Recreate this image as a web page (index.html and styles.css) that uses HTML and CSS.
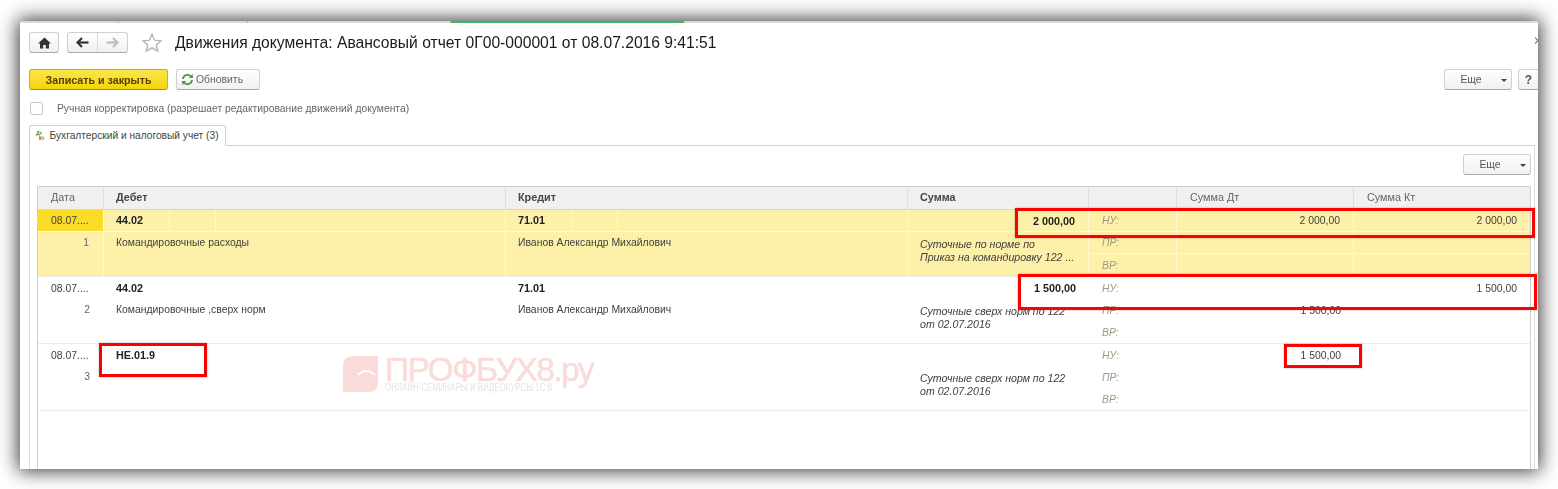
FILE: index.html
```html
<!DOCTYPE html>
<html lang="ru">
<head>
    <meta charset="UTF-8">
    <title>Движения документа</title>
    <link rel="stylesheet" href="styles.css">
</head>
<body>

<div class="window">
    <div class="top-strip"><span class="seg seg-1"></span><span class="seg seg-2"></span><span class="seg seg-3"></span><span class="strip-green"></span></div>
    <svg class="close-mark" width="3" height="7" viewBox="0 0 3 7"><path d="M0 .5 L3 3.5 L0 6.5" fill="none" stroke="#777" stroke-width="1.2"/></svg>

    <div class="title-row">
        <button class="btn btn-home">
            <svg width="13" height="12" viewBox="0 0 13 12"><path d="M6.5 .5 L13 6.5 L11 6.5 L11 11.5 L7.8 11.5 L7.8 8 L5.2 8 L5.2 11.5 L2 11.5 L2 6.5 L0 6.5 Z" fill="#333"/></svg>
        </button>
        <div class="btn nav-pair">
            <span class="nav-half">
                <svg width="13" height="11" viewBox="0 0 13 11"><path d="M2 5.5 L12.5 5.5" stroke="#333" stroke-width="2.2" fill="none"/><path d="M6 1 L1.5 5.5 L6 10" stroke="#333" stroke-width="2.2" fill="none"/></svg>
            </span>
            <span class="nav-half">
                <svg width="13" height="11" viewBox="0 0 13 11"><path d="M11 5.5 L.5 5.5" stroke="#bdbdbd" stroke-width="2.2" fill="none"/><path d="M7 1 L11.5 5.5 L7 10" stroke="#bdbdbd" stroke-width="2.2" fill="none"/></svg>
            </span>
        </div>
        <svg class="star" width="20" height="19" viewBox="0 0 20 19"><path d="M10 1.2 L12.6 7.2 L19 7.8 L14.2 12 L15.7 18.2 L10 14.9 L4.3 18.2 L5.8 12 L1 7.8 L7.4 7.2 Z" fill="none" stroke="#b5b5b5" stroke-width="1.4"/></svg>
        <h1>Движения документа: Авансовый отчет 0Г00-000001 от 08.07.2016 9:41:51</h1>
    </div>

    <div class="action-row">
        <button class="btn btn-save">Записать и закрыть</button>
        <button class="btn btn-refresh">
            <svg width="13" height="13" viewBox="0 0 13 13"><path d="M2 6 A4.5 4.5 0 0 1 10 3.5" fill="none" stroke="#3a9a3a" stroke-width="1.7"/><path d="M8 5 L12 5 L11.6 1 Z" fill="#3a9a3a"/><path d="M11 7 A4.5 4.5 0 0 1 3 9.5" fill="none" stroke="#3a9a3a" stroke-width="1.7"/><path d="M5 8 L1 8 L1.4 12 Z" fill="#3a9a3a"/></svg>
            Обновить
        </button>
        <button class="btn btn-more btn-more-top">Еще<span class="caret"></span></button>
        <button class="btn btn-help">?</button>
    </div>

    <label class="check-row"><span class="check"></span>Ручная корректировка (разрешает редактирование движений документа)</label>

    <div class="tabs">
        <div class="tab">
            <span class="tab-icon"><span class="dt">Дт</span><span class="kt">Кт</span></span>
            Бухгалтерский и налоговый учет (3)
        </div>
    </div>

    <div class="panel">
        <div class="panel-bar">
            <button class="btn btn-more">Еще<span class="caret"></span></button>
        </div>
        <div class="grid-box">
            <table class="grid">
                <colgroup>
                    <col class="c-date"><col class="c-acc"><col class="c-acc"><col class="c-sum"><col class="c-label"><col class="c-val"><col class="c-val2">
                </colgroup>
                <thead>
                    <tr>
                        <th class="th-light">Дата</th>
                        <th class="tight">Дебет</th>
                        <th class="tight">Кредит</th>
                        <th class="tight">Сумма</th>
                        <th></th>
                        <th class="th-light">Сумма Дт</th>
                        <th class="th-light">Сумма Кт</th>
                    </tr>
                </thead>
                <tbody class="rec selected">
                    <tr>
                        <td class="date-cur">08.07....</td>
                        <td class="split"><div><span><b>44.02</b></span><span></span><span></span></div></td>
                        <td class="split"><div><span><b>71.01</b></span><span></span><span></span></div></td>
                        <td class="num"><b>2 000,00</b></td>
                        <td class="lbl">НУ:</td>
                        <td class="num">2 000,00</td>
                        <td class="num">2 000,00</td>
                    </tr>
                    <tr>
                        <td class="idx" rowspan="2">1</td>
                        <td class="top tight" rowspan="2">Командировочные расходы</td>
                        <td class="top tight" rowspan="2">Иванов Александр Михайлович</td>
                        <td class="note tight" rowspan="2">Суточные по норме по<br>Приказ на командировку 122 ...</td>
                        <td class="lbl">ПР:</td>
                        <td></td>
                        <td></td>
                    </tr>
                    <tr class="last">
                        <td class="lbl">ВР:</td>
                        <td></td>
                        <td></td>
                    </tr>
                </tbody>
                <tbody class="rec">
                    <tr>
                        <td>08.07....</td>
                        <td class="tight"><b>44.02</b></td>
                        <td class="tight"><b>71.01</b></td>
                        <td class="num"><b>1 500,00</b></td>
                        <td class="lbl">НУ:</td>
                        <td></td>
                        <td class="num">1 500,00</td>
                    </tr>
                    <tr>
                        <td class="idx" rowspan="2">2</td>
                        <td class="top tight" rowspan="2">Командировочные ,сверх норм</td>
                        <td class="top tight" rowspan="2">Иванов Александр Михайлович</td>
                        <td class="note tight" rowspan="2">Суточные сверх норм по 122<br>от 02.07.2016</td>
                        <td class="lbl">ПР:</td>
                        <td class="num">1 500,00</td>
                        <td></td>
                    </tr>
                    <tr class="last">
                        <td class="lbl">ВР:</td>
                        <td></td>
                        <td></td>
                    </tr>
                </tbody>
                <tbody class="rec">
                    <tr>
                        <td>08.07....</td>
                        <td class="tight"><b>НЕ.01.9</b></td>
                        <td></td>
                        <td></td>
                        <td class="lbl">НУ:</td>
                        <td class="num">1 500,00</td>
                        <td></td>
                    </tr>
                    <tr>
                        <td class="idx" rowspan="2">3</td>
                        <td class="top" rowspan="2"></td>
                        <td class="top" rowspan="2"></td>
                        <td class="note tight" rowspan="2">Суточные сверх норм по 122<br>от 02.07.2016</td>
                        <td class="lbl">ПР:</td>
                        <td></td>
                        <td></td>
                    </tr>
                    <tr class="last">
                        <td class="lbl">ВР:</td>
                        <td></td>
                        <td></td>
                    </tr>
                </tbody>
            </table>
        </div>
    </div>

    <!-- водяной знак -->
    <div class="watermark">
        <svg width="35" height="36" viewBox="0 0 35 36"><path d="M10 0 L35 0 L35 27 Q35 36 26 36 L0 36 L0 10 Q0 0 10 0 Z" fill="#f9dcd9"/><path d="M15 19 Q23 11 32 19" fill="none" stroke="#fff" stroke-width="1.8"/></svg>
        <div class="wm-text">
            <div class="wm-big">ПРОФБУХ8.ру</div>
            <div class="wm-small">ОНЛАЙН-СЕМИНАРЫ И ВИДЕОКУРСЫ 1С:8</div>
        </div>
    </div>

    <!-- красные рамки поверх таблицы -->
    <div class="mark mark-1"></div>
    <div class="mark mark-2"></div>
    <div class="mark mark-3"></div>
    <div class="mark mark-4"></div>
</div>

</body>
</html>
```

FILE: styles.css
```css
* {
    box-sizing: border-box;
}
html, body {
    height: 100%;
    overflow: hidden;
}
body {
    margin: 0;
    background-color: white;
    font-family: "Liberation Sans", Arial, sans-serif;
    font-size: 10.4px;
    color: #444;
}
.window {
    position: relative;
    width: 1518px;
    height: 448px;
    margin: 21px 0 0 20px;
    background-color: white;
    box-shadow: 0 0 18px 2px rgba(0, 0, 0, 0.78);
    display: flex;
    flex-direction: column;
    filter: blur(0.35px);
}
.top-strip {
    display: flex;
    height: 2px;
    background-color: #d8d8d8;
}
.seg {
    height: 2px;
    border-right: 1px solid #b5b5b5;
}
.seg-1 {
    width: 99px;
}
.seg-2 {
    width: 129px;
}
.seg-3 {
    width: 203px;
}
.strip-green {
    display: block;
    width: 233px;
    height: 2px;
    background-color: #3fb56b;
}
.close-mark {
    position: absolute;
    right: 0;
    top: 16px;
}

/* кнопки */
.btn {
    height: 21px;
    padding: 0;
    border: 1px solid #cfcfcf;
    border-bottom-color: #a9a9a9;
    border-radius: 3px;
    background: linear-gradient(#ffffff, #f0f0f0);
    font-family: inherit;
    font-size: 10.4px;
    color: #555;
    display: flex;
    align-items: center;
    justify-content: center;
}
.title-row {
    display: flex;
    align-items: center;
    height: 21px;
    margin-top: 9px;
    padding-left: 9px;
}
.btn-home {
    width: 30px;
}
.nav-pair {
    width: 61px;
    margin-left: 8px;
}
.nav-half {
    flex: 1;
    height: 100%;
    display: flex;
    align-items: center;
    justify-content: center;
}
.nav-half:first-child {
    border-right: 1px solid #d8d8d8;
}
.star {
    margin-left: 14px;
}
h1 {
    margin: 1px 0 0 13px;
    font-size: 15.65px;
    font-weight: normal;
    color: #1a1a1a;
}
.action-row {
    display: flex;
    align-items: center;
    margin-top: 16px;
    padding-left: 9px;
}
.btn-save {
    width: 139px;
    border-color: #d0b000;
    border-bottom-color: #a89000;
    background: linear-gradient(#fbe64a, #f6d40a);
    font-size: 10.7px;
    font-weight: bold;
    color: #4e4400;
}
.btn-refresh {
    width: 84px;
    margin-left: 8px;
    padding-left: 4px;
    justify-content: flex-start;
    gap: 2px;
    color: #666;
}
.btn-more {
    width: 68px;
    position: relative;
    padding-right: 14px;
}
.btn-more-top {
    margin-left: auto;
}
.btn-help {
    width: 20px;
    margin-left: 6px;
    font-size: 12px;
    font-weight: bold;
    border-right: 0;
    border-radius: 3px 0 0 3px;
}
.caret {
    position: absolute;
    right: 4px;
    top: 9px;
    border: 3px solid transparent;
    border-top-color: #444;
    border-bottom: 0;
}
.check-row {
    display: flex;
    align-items: center;
    height: 14px;
    margin-top: 11px;
    padding-left: 10px;
    font-size: 10.3px;
    color: #666;
}
.check {
    width: 13px;
    height: 13px;
    margin-right: 14px;
    border: 1px solid #c8c8c8;
    border-radius: 2px;
}

/* вкладка */
.tabs {
    display: flex;
    margin-top: 10px;
    padding-left: 9px;
}
.tab {
    display: flex;
    align-items: center;
    gap: 5px;
    width: 197px;
    height: 21px;
    margin-bottom: -1px;
    padding-left: 6px;
    position: relative;
    z-index: 1;
    background-color: white;
    border: 1px solid #d0d0d0;
    border-bottom-color: white;
    border-radius: 3px 3px 0 0;
    font-size: 10.2px;
    color: #444;
    white-space: nowrap;
}
.tab-icon {
    display: flex;
    flex-direction: column;
    font-size: 5px;
    font-weight: bold;
    line-height: 5px;
}
.dt {
    color: #2f8f3a;
}
.kt {
    color: #e03030;
    padding-left: 3px;
}
.panel {
    flex: 1;
    min-height: 0;
    margin-left: 9px;
    margin-right: 3px;
    padding: 0 3px 0 7px;
    border-top: 1px solid #d0d0d0;
    border-left: 1px solid #dcdcdc;
    border-right: 1px solid #dcdcdc;
    display: flex;
    flex-direction: column;
}
.panel-bar {
    display: flex;
    justify-content: flex-end;
    margin-top: 8px;
    height: 21px;
}
.grid-box {
    flex: 1;
    min-height: 0;
    margin-top: 11px;
    border: 1px solid #cfcfcf;
    border-bottom: 0;
}

/* таблица */
.grid {
    width: 100%;
    table-layout: fixed;
    border-collapse: separate;
    border-spacing: 0;
}
.c-date {
    width: 66px;
}
.c-acc {
    width: 402px;
}
.c-sum {
    width: 181px;
}
.c-label {
    width: 88px;
}
.c-val {
    width: 177px;
}
th {
    height: 23px;
    padding: 0 13px 2px;
    text-align: left;
    background-color: #f0f0f0;
    border-right: 1px solid #dfdfdf;
    border-bottom: 1px solid #d4d4d4;
    font-size: 10.8px;
    color: #444;
}
th:last-child {
    border-right: 0;
}
.th-light {
    font-weight: normal;
    color: #666;
}
td {
    height: 22px;
    padding: 0 13px;
    color: #3f3f3f;
    overflow: hidden;
    white-space: nowrap;
}
td b {
    font-size: 10.8px;
    color: #222;
}
th.tight, td.tight {
    padding-left: 12px;
}
.rec .last td {
    height: 23px;
    border-bottom: 1px solid #ececec;
}
.rec td[rowspan] {
    border-bottom: 1px solid #ececec;
}
.num {
    text-align: right;
}
.lbl {
    font-style: italic;
    color: #9b9b85;
}
.idx {
    vertical-align: top;
    text-align: right;
    padding-top: 5px;
    padding-right: 14px;
    color: #666;
}
.top {
    vertical-align: top;
    padding-top: 5px;
}
.note {
    vertical-align: top;
    padding-top: 6px;
    font-size: 10.6px;
    font-style: italic;
    line-height: 12.5px;
}
.split {
    padding: 0;
}
.split div {
    display: flex;
    height: 100%;
}
.split span {
    height: 21px;
    line-height: 21px;
    padding-left: 12px;
    width: 46px;
}
.split span:first-child {
    width: 66px;
}
.split span:last-child {
    flex: 1;
}
.selected td {
    background-color: #fdf0a8;
    border-right: 1px solid #fff8d4;
    border-bottom: 1px solid #fff8d4;
}
.selected td:last-child {
    border-right: 0;
}
.selected .split span {
    border-right: 1px solid #fff8d4;
}
.selected .split span:last-child {
    border-right: 0;
}
.selected .date-cur {
    background-color: #fadc28;
}

/* водяной знак */
.watermark {
    position: absolute;
    left: 323px;
    top: 335px;
    display: flex;
    gap: 7px;
    pointer-events: none;
}
.wm-text {
    margin-top: -2px;
}
.wm-big {
    font-size: 33.5px;
    line-height: 32px;
    letter-spacing: -1.55px;
    -webkit-text-stroke: 0.6px #f9dcd9;
    color: #f9dcd9;
    white-space: nowrap;
}
.wm-small {
    margin-top: -3px;
    font-size: 10px;
    line-height: 10px;
    color: #e4e4e4;
    white-space: nowrap;
    transform: scaleX(0.79);
    transform-origin: left top;
}

/* красные рамки */
.mark {
    position: absolute;
    border: 3px solid #f00;
    box-shadow: 0 0 2px rgba(0, 0, 0, 0.3);
}
.mark-1 {
    left: 995px;
    top: 187px;
    width: 520px;
    height: 30px;
}
.mark-2 {
    left: 998px;
    top: 253px;
    width: 519px;
    height: 36px;
}
.mark-3 {
    left: 79px;
    top: 322px;
    width: 108px;
    height: 34px;
}
.mark-4 {
    left: 1264px;
    top: 323px;
    width: 78px;
    height: 24px;
}
```
